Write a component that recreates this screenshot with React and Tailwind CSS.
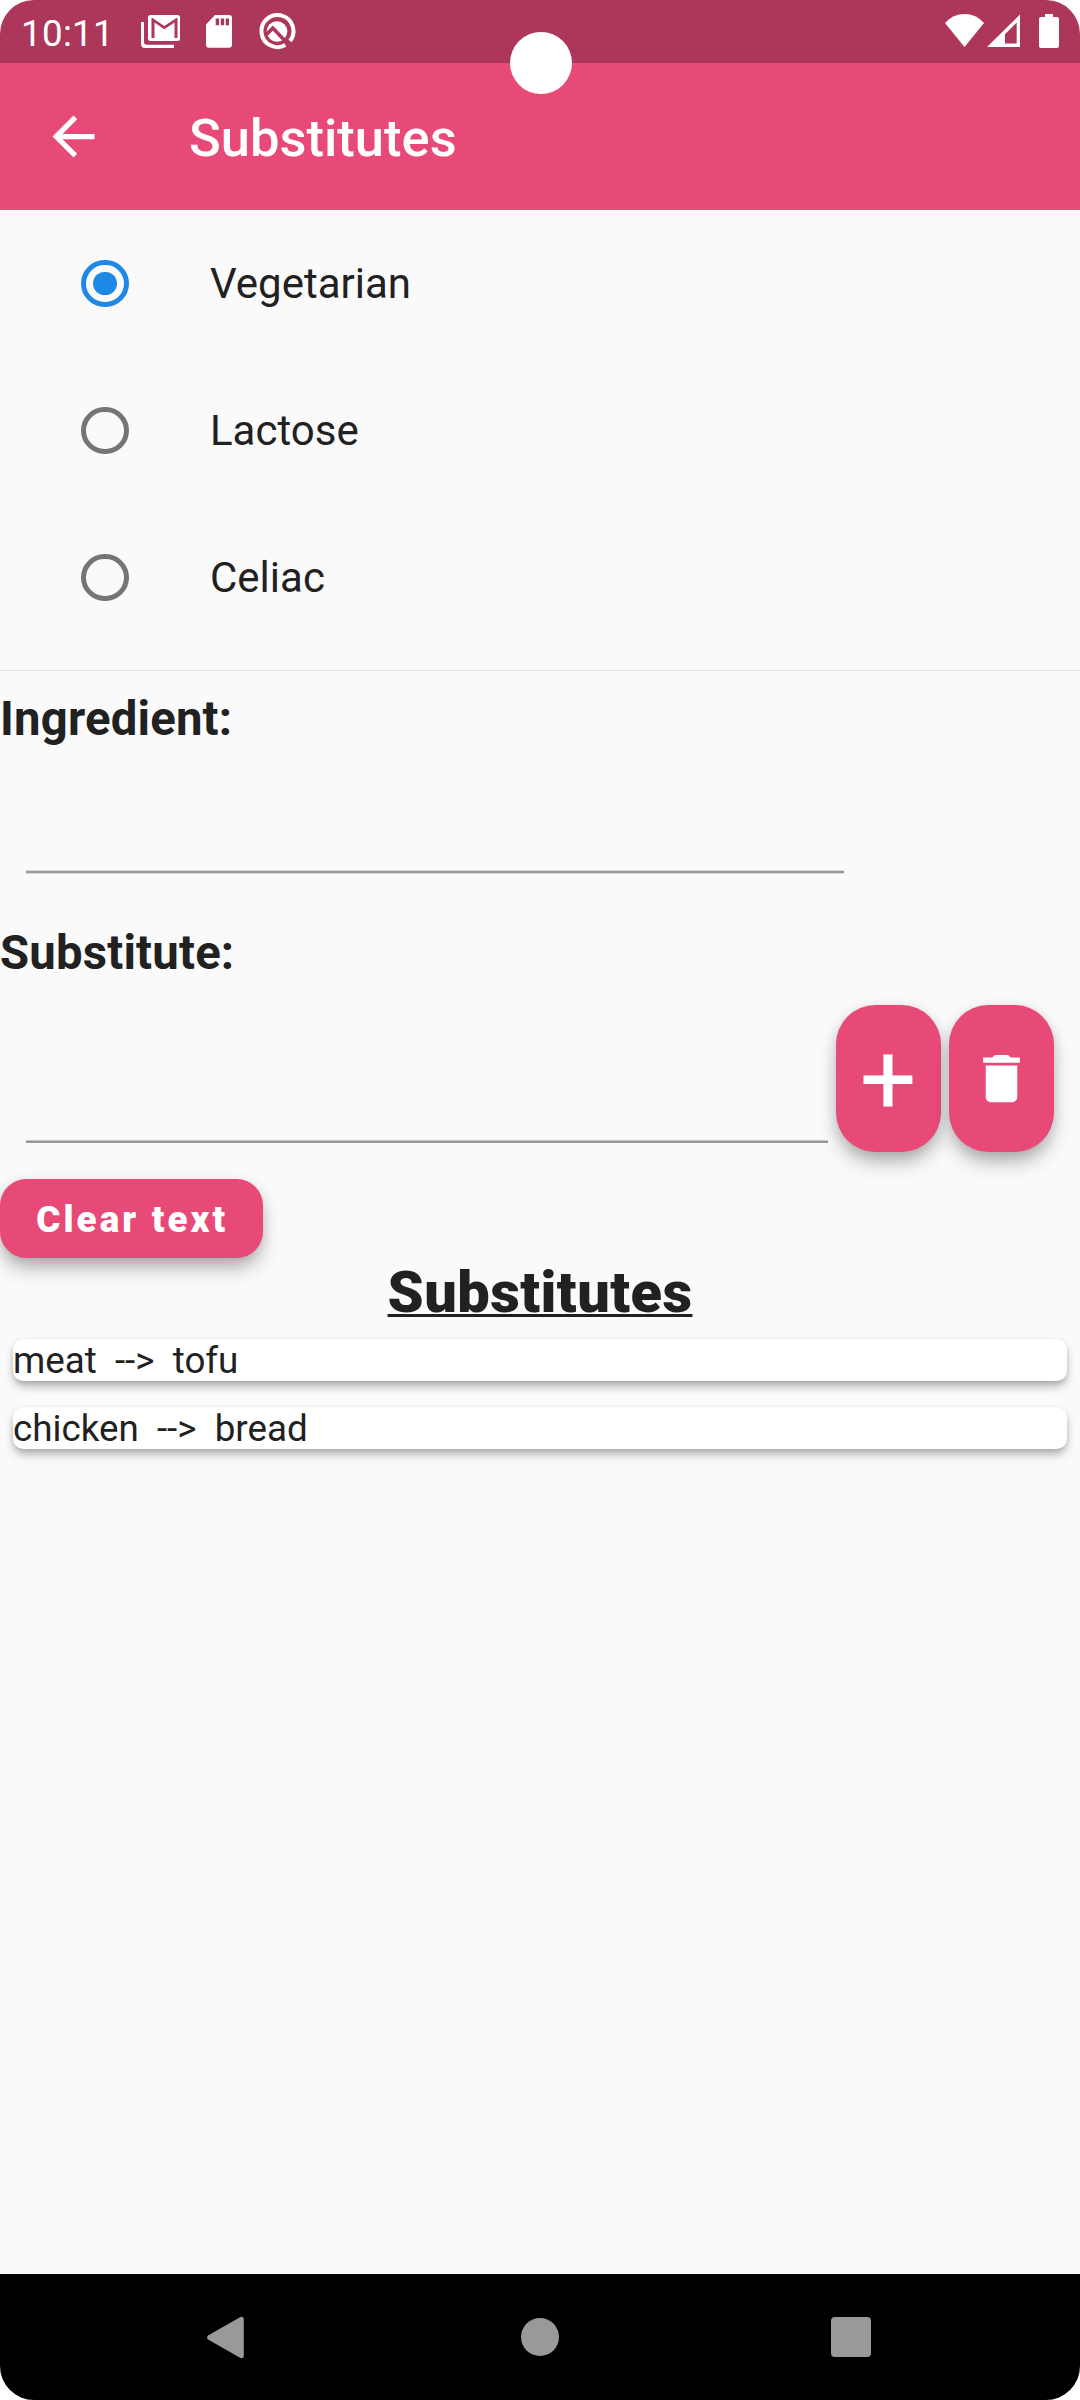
import { useState } from "react";

function MailStackIcon() {
  return (
    <svg className="ml-[32px] h-[34px] w-[40px]" viewBox="141 15 40 34" fill="none">
      <path d="M141 22h3v20.6q0 2.1 2.1 2.1H174v3.3H145q-4 0-4-4z" fill="#fff" />
      <path
        fillRule="evenodd"
        d="M150.500 15H177.500Q180 15 180 17.500V38.500Q180 41 177.500 41H150.500Q148 41 148 38.500V17.500Q148 15 150.500 15ZM151.500 18V38H154.500V22.500L164.300 29.200L174.500 22.500V38H177.500V18H176.500L164.300 26L152.500 18Z"
        fill="#fff"
      />
    </svg>
  );
}

function SdCardIcon() {
  return (
    <svg className="ml-[25px] h-[34px] w-[27px]" viewBox="206 15 27 34">
      <path
        fillRule="evenodd"
        d="M215 15h14q3 0 3 3v26.800q0 3-3 3h-20q-3 0-3-3V24.500zM215.700 18.500v6.800h3.300v-6.800zM220.800 18.500v6.800h3.300v-6.800zM225.700 18.500v6.800h3.300v-6.800z"
        fill="#fff"
      />
    </svg>
  );
}

function AndroidQIcon() {
  return (
    <svg className="ml-[25px] h-[38px] w-[38px]" viewBox="258 13 38 38" fill="none">
      <path d="M285.300 45A16 16 0 1 1 290 41" stroke="#fff" strokeWidth="4" />
      <circle cx="277" cy="31.500" r="10.300" fill="#fff" />
      <path d="M266.500 34.500L272.800 28L288.500 44.500" stroke="#ad375a" strokeWidth="3.600" />
    </svg>
  );
}

function StatusBar() {
  return (
    <div className="flex h-[63px] items-start bg-[#ad375a] pl-[21px] pt-[13px] text-white">
      <span className="mt-[-1px] w-[88px] text-[36.750px] leading-[43px] tracking-[0.300px]">10:11</span>
      <div className="flex items-start pt-[2px]">
        <MailStackIcon />
        <SdCardIcon />
        <div className="-mt-[2px]">
          <AndroidQIcon />
        </div>
      </div>
      <svg className="mr-[20px] ml-auto h-[36px] w-[116px]" viewBox="944 13 116 36">
        <path d="M945 23Q953 14 964.500 14T984 23L964.500 47z" fill="#fff" />
        <path fillRule="evenodd" d="M1020 14.500V47H987zM1016.700 22.500L1005 34.200V43.500H1016.700z" fill="#fff" />
        <path d="M1045 14h8v3h4q2 0 2 2v27q0 2-2 2h-16q-2 0-2-2V19q0-2 2-2h4z" fill="#fff" />
      </svg>
    </div>
  );
}

function RadioRow({ label, selected, onSelect }) {
  return (
    <button type="button" onClick={onSelect} className="flex h-[147px] w-full items-center pl-[81.375px] text-left">
      <span
        className={
          selected
            ? "flex size-[47.250px] items-center justify-center rounded-full border-[5.250px] border-[#1e88e5]"
            : "flex size-[47.250px] items-center justify-center rounded-full border-[5.250px] border-[#757575]"
        }
      >
        {selected && <span className="size-[23.600px] rounded-full bg-[#1e88e5]" />}
      </span>
      <span className="ml-[81.375px] text-[42px] leading-[50px]">{label}</span>
    </button>
  );
}

const fabClass =
  "flex h-[147px] w-[105px] items-center justify-center rounded-[39.400px] bg-[#e84a78] text-white shadow-[0_12px_20px_-3px_rgba(0,0,0,0.31),0_2px_13px_0_rgba(0,0,0,0.09)]";

const substitutes = [
  { from: "meat", to: "tofu" },
  { from: "chicken", to: "bread" },
];

export default function App() {
  const [diet, setDiet] = useState("Vegetarian");

  return (
    <div className="h-[2400px] w-[1080px] bg-white">
      <div className="relative flex h-full flex-col overflow-hidden rounded-[34px] bg-[#fafafa] font-['Roboto',sans-serif] text-[#212121]">
        <StatusBar />
        <div className="absolute top-[31.500px] left-[509.500px] size-[62px] rounded-full bg-white" />

        <header className="flex h-[147px] items-center bg-[#e84a78] pl-[42px] text-white">
          <svg className="size-[63px]" viewBox="0 0 24 24" fill="currentColor">
            <path d="M20 11H7.830l5.590-5.590L12 4l-8 8 8 8 1.410-1.410L7.830 13H20v-2z" />
          </svg>
          <h1 className="ml-[84px] pt-[2px] text-[52.500px] leading-[62px] font-medium">Substitutes</h1>
        </header>

        <div>
          {["Vegetarian", "Lactose", "Celiac"].map((name) => (
            <RadioRow key={name} label={name} selected={diet === name} onSelect={() => setDiet(name)} />
          ))}
        </div>

        <div className="mt-[19px] h-px bg-[#dfdfdf]" />

        <label className="mt-[20px] block h-[56px] text-[47.250px] leading-[56px] font-bold tracking-[0.200px]">
          Ingredient:
        </label>
        <div className="mt-[14px] ml-[26px] flex h-[113px] w-[818px] flex-col justify-end">
          <div className="h-[4px] border-y border-[#d8d8d8] bg-[#999]" />
        </div>

        <label className="mt-[51px] block h-[56px] text-[47.250px] leading-[56px] font-bold tracking-[0.200px]">
          Substitute:
        </label>
        <div className="mt-[24px] flex h-[147px]">
          <div className="ml-[26px] flex w-[802px] flex-col justify-end pb-[9px]">
            <div className="h-[3px] border-t border-[#c4c4c4] bg-[#999]" />
          </div>
          <div className="ml-[8px] flex gap-[8px]">
            <button type="button" className={fabClass}>
              <span className="pt-[2px] pr-[1px] text-[100px] leading-[117px] font-normal">+</span>
            </button>
            <button type="button" className={fabClass}>
              <svg className="size-[63px]" viewBox="0 0 24 24" fill="currentColor">
                <path d="M6 19c0 1.100.9 2 2 2h8c1.100 0 2-.9 2-2V7H6v12zM19 4h-3.500l-1-1h-5l-1 1H5v2h14V4z" />
              </svg>
            </button>
          </div>
        </div>

        <button
          type="button"
          className="mt-[27px] flex h-[78.750px] w-[262.500px] items-center justify-center rounded-[26.250px] bg-[#e84a78] pt-[2px] pl-[2px] text-[36.750px] leading-[43px] font-black tracking-[3.100px] text-white shadow-[0_12px_20px_-3px_rgba(0,0,0,0.31),0_2px_13px_0_rgba(0,0,0,0.09)]"
        >
          Clear text
        </button>

        <h2 className="h-[67.250px] pt-[1px] text-center text-[57.750px] leading-[67px] font-black tracking-[0.450px] underline decoration-[3px] underline-offset-[2px]">
          Substitutes
        </h2>

        <ul className="mx-[13px] mt-[14px] flex flex-col gap-[26px]">
          {substitutes.map((s) => (
            <li
              key={s.from}
              className="h-[42px] rounded-[10.500px] bg-white text-[36.750px] leading-[44px] whitespace-pre shadow-[0_6px_10px_-1px_rgba(0,0,0,0.31),0_1px_5px_0_rgba(0,0,0,0.08)]"
            >
              {`${s.from}  -->  ${s.to}`}
            </li>
          ))}
        </ul>

        <nav className="mt-auto flex h-[126px] shrink-0 items-center bg-black">
          <svg className="ml-[206px] h-[43px] w-[38px]" viewBox="0 0 38 43" fill="#999" stroke="#999" strokeWidth="5" strokeLinejoin="round">
            <path d="M35.300 3.300V39.700L3.700 21.500z" />
          </svg>
          <div className="ml-[277px] size-[38px] rounded-full bg-[#999]" />
          <div className="ml-[272px] size-[40px] rounded-[4px] bg-[#999]" />
        </nav>
      </div>
    </div>
  );
}
